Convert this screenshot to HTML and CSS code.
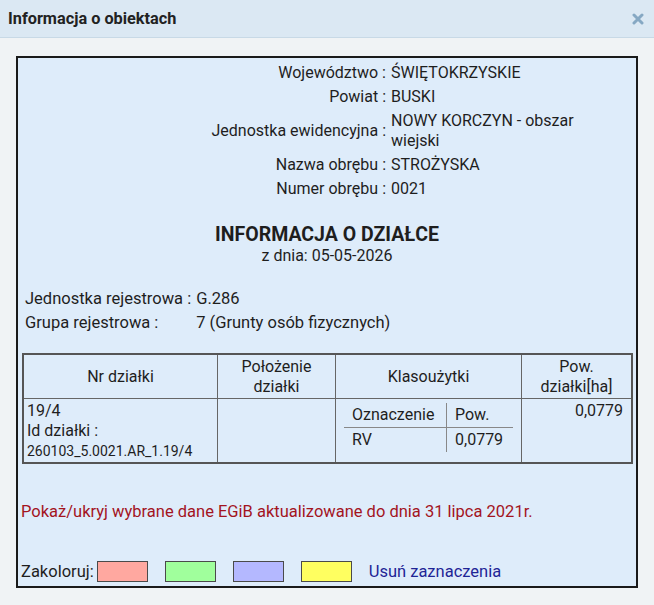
FILE: index.html
```html
<!DOCTYPE html>
<html lang="pl">

<head>
    <meta charset="UTF-8">
    <meta name="viewport" content="width=device-width, initial-scale=1.0">
    <title>Informacja o obiektach</title>
    <link rel="stylesheet" href="styles.css">
</head>

<body>
    <div class="dialog">
        <div class="titlebar">
            <span class="title">Informacja o obiektach</span>
            <svg class="close" width="12" height="12" viewBox="0 0 12 12">
                <path d="M2 2 L10 10 M10 2 L2 10" stroke="#86a8c3" stroke-width="3" stroke-linecap="round" />
            </svg>
        </div>

        <div class="dialog-body">
            <div class="info">
                <div class="location">
                    <div class="label">Województwo :</div>
                    <div class="value">ŚWIĘTOKRZYSKIE</div>
                    <div class="label">Powiat :</div>
                    <div class="value">BUSKI</div>
                    <div class="label">Jednostka ewidencyjna :</div>
                    <div class="value">NOWY KORCZYN - obszar wiejski</div>
                    <div class="label">Nazwa obrębu :</div>
                    <div class="value">STROŻYSKA</div>
                    <div class="label">Numer obrębu :</div>
                    <div class="value">0021</div>
                </div>

                <div class="heading">
                    <h2>INFORMACJA O DZIAŁCE</h2>
                    <div class="date">z dnia: 05-05-2026</div>
                </div>

                <div class="register">
                    <div>Jednostka rejestrowa :</div>
                    <div>G.286</div>
                    <div>Grupa rejestrowa :</div>
                    <div>7 (Grunty osób fizycznych)</div>
                </div>

                <table class="parcels">
                    <thead>
                        <tr>
                            <th class="col-nr">Nr działki</th>
                            <th class="col-pos">Położenie<br>działki</th>
                            <th class="col-klas">Klasoużytki</th>
                            <th class="col-area">Pow.<br>działki[ha]</th>
                        </tr>
                    </thead>
                    <tbody>
                        <tr>
                            <td>19/4<br>Id działki :<br><span class="parcel-id">260103_5.0021.AR_1.19/4</span></td>
                            <td></td>
                            <td>
                                <table class="uses">
                                    <tr>
                                        <td>Oznaczenie</td>
                                        <td>Pow.</td>
                                    </tr>
                                    <tr>
                                        <td>RV</td>
                                        <td>0,0779</td>
                                    </tr>
                                </table>
                            </td>
                            <td class="area">0,0779</td>
                        </tr>
                    </tbody>
                </table>

                <div class="toggle">Pokaż/ukryj wybrane dane EGiB aktualizowane do dnia 31 lipca 2021r.</div>

                <div class="colorize">
                    <span>Zakoloruj:</span>
                    <button class="swatch red"></button>
                    <button class="swatch green"></button>
                    <button class="swatch blue"></button>
                    <button class="swatch yellow"></button>
                    <a class="clear-link">Usuń zaznaczenia</a>
                </div>
            </div>
        </div>
    </div>
</body>

</html>
```

FILE: styles.css
```css
body {
    margin: 0;
    background: #f0f3f5;
    font-family: Roboto, 'Liberation Sans', sans-serif;
    font-size: 16px;
    color: #1e1e1e;
}

.dialog {
    width: 654px;
    height: 605px;
    overflow: hidden;
}

.titlebar {
    display: flex;
    justify-content: space-between;
    align-items: center;
    height: 37px;
    padding: 0 10px 0 8px;
    background: #dbe8f3;
    border-bottom: 1px solid #c8d9e6;
}

.title {
    font-weight: bold;
    font-size: 16.3px;
    color: #222;
}

.close {
    margin-top: 1px;
}

.dialog-body {
    padding: 18px 16px 0 16px;
}

.info {
    border: 2px solid #1a1a1a;
    background: #deecfa;
    height: 525px;
    padding: 3px 3px 0 3px;
}

/* location block: right-aligned labels, values on the right */
.location {
    display: grid;
    grid-template-columns: 1fr 200px;
    column-gap: 5px;
    padding-right: 42px;
    line-height: 20px;
}

.location .label {
    text-align: right;
    padding: 2px 0;
    align-self: center;
}

.location .value {
    padding: 2px 0;
}

.heading {
    text-align: center;
    margin-top: 22px;
}

.heading h2 {
    margin: 0;
    font-size: 19.5px;
    line-height: 23px;
    font-weight: bold;
}

.date {
    line-height: 20px;
}

.register {
    display: grid;
    grid-template-columns: auto 1fr;
    column-gap: 5px;
    margin: 21px 0 0 4px;
    line-height: 24px;
    font-size: 16.5px;
}

.parcels {
    width: 611px;
    margin: 18px 0 0 1px;
    border-collapse: collapse;
    border: 2px solid #555;
}

.parcels th,
.parcels > tbody > tr > td {
    border: 1px solid #666;
    line-height: 20px;
    vertical-align: top;
}

.parcels th {
    font-weight: normal;
    height: 43px;
    vertical-align: middle;
    padding: 0 3px;
}

.parcels > tbody > tr > td {
    padding: 2px 3px 1px 3px;
}

.col-nr {
    width: 187px;
}

.col-pos {
    width: 111px;
}

.col-klas {
    width: 179px;
}

.parcel-id {
    font-size: 14px;
}

.area {
    text-align: right;
    padding-right: 8px !important;
}

/* nested table of land use classes */
.uses {
    border-collapse: collapse;
    margin: 2px 0 0 5px;
    width: 169px;
}

.uses td {
    padding: 2px 8px;
    line-height: 20px;
}

.uses tr:first-child td {
    border-bottom: 1px solid #888;
}

.uses td:first-child {
    border-right: 1px solid #888;
    width: 86px;
}

.toggle {
    color: #a3141e;
    margin-top: 38px;
    line-height: 20px;
    font-size: 16.5px;
}

.colorize {
    display: flex;
    align-items: center;
    margin-top: 39px;
    line-height: 20px;
    font-size: 16.5px;
}

.colorize span {
    margin-right: 3px;
}

.swatch {
    width: 51px;
    height: 21px;
    border: 1px solid #4a4a4a;
    padding: 0;
    margin-right: 17px;
}

.swatch.red {
    background: #ffa8a0;
}

.swatch.green {
    background: #a0ff9c;
}

.swatch.blue {
    background: #b4b8ff;
}

.swatch.yellow {
    background: #ffff60;
}

.clear-link {
    color: #1f2596;
    cursor: pointer;
}
```
